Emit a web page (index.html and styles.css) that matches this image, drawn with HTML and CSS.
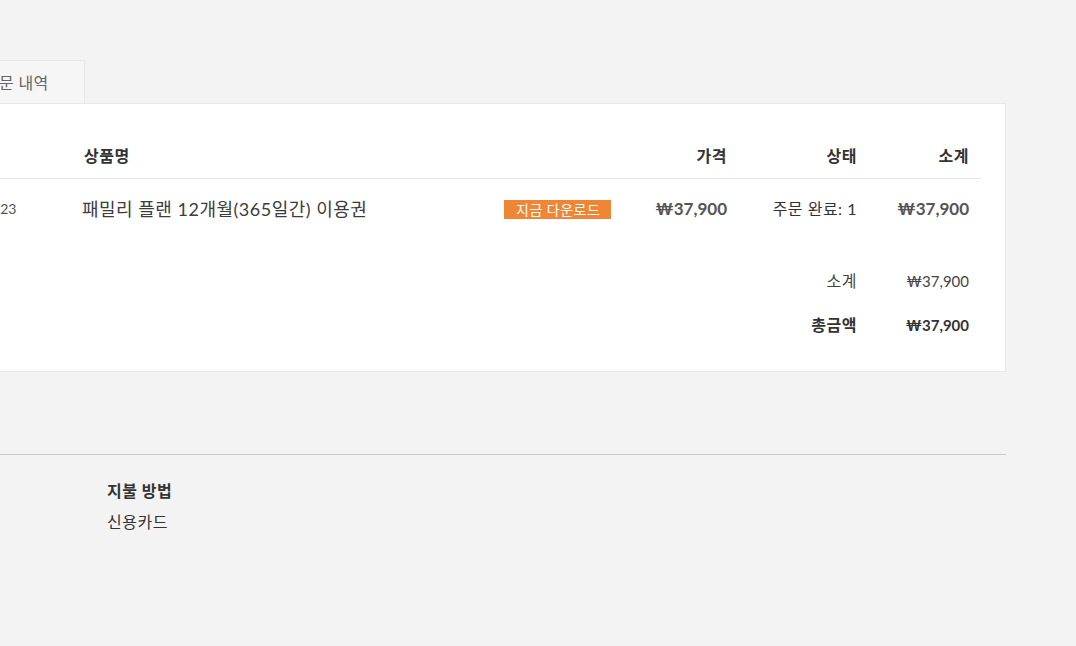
FILE: index.html
```
<!DOCTYPE html>
<html lang="ko">
<head>
<meta charset="utf-8">
<title>주문 내역</title>
<link rel="stylesheet" href="styles.css">
</head>
<body>
<div class="page">
  <div class="tabs">
    <div class="tab">주문 내역</div>
  </div>
  <div class="panel">
    <div class="row head">
      <div class="cell"></div>
      <div class="cell">상품명</div>
      <div class="cell"></div>
      <div class="cell right">가격</div>
      <div class="cell right">상태</div>
      <div class="cell right">소계</div>
    </div>
    <div class="row item">
      <div class="cell num">5123</div>
      <div class="cell name">패밀리 플랜 12개월(365일간) 이용권</div>
      <div class="cell"><span class="badge">지금 다운로드</span></div>
      <div class="cell right price">₩37,900</div>
      <div class="cell right status">주문 완료: 1</div>
      <div class="cell right price">₩37,900</div>
    </div>
    <div class="totals">
      <div class="row total">
        <div class="cell right label">소계</div>
        <div class="cell right value">₩37,900</div>
      </div>
      <div class="row total grand">
        <div class="cell right label">총금액</div>
        <div class="cell right value">₩37,900</div>
      </div>
    </div>
  </div>
  <div class="footer">
    <div class="pay">
      <div class="pay-title">지불 방법</div>
      <div class="pay-value">신용카드</div>
    </div>
  </div>
</div>
</body>
</html>
```
FILE: styles.css
```
html, body {
  margin: 0;
  padding: 0;
}
body {
  background: #f3f3f3;
  font-family: "Lato", "Noto Sans CJK KR", sans-serif;
  color: #333;
  overflow: hidden;
  height: 646px;
}
.page {
  margin-left: -53px;
  width: 1059px;
  padding-top: 60px;
}
.tabs {
  display: flex;
}
.tab {
  height: 43px;
  box-sizing: border-box;
  padding: 0 36px;
  display: flex;
  align-items: center;
  background: #f6f6f6;
  border: 1px solid #e7e7e7;
  border-bottom: none;
  font-size: 16px;
  letter-spacing: 0.3px;
  color: #666;
}
.panel {
  background: #fff;
  border: 1px solid #e8e8e8;
  padding: 30px 24px 24px;
}
.row {
  display: grid;
  grid-template-columns: 100px 420px 132px 115px 130px 1fr;
  align-items: center;
}
.cell {
  padding: 0 12px;
  line-height: 22px;
  white-space: nowrap;
}
.right {
  text-align: right;
}
.head {
  height: 44px;
  border-bottom: 1px solid #e6e6e6;
  font-size: 16px;
  letter-spacing: 0.5px;
  font-weight: 700;
  color: #333;
}
.item {
  height: 60px;
}
.num {
  font-size: 14px;
  color: #555;
  padding-right: 14px;
}
.name {
  font-size: 18px;
  letter-spacing: 0.5px;
  color: #3c3c3c;
  padding-left: 10px;
}
.badge {
  display: inline-block;
  background: #ee8636;
  color: #fff;
  font-size: 14px;
  letter-spacing: 0.5px;
  line-height: 19px;
  padding: 0 11px 0 12px;
  vertical-align: middle;
  position: relative;
  top: -1px;
}
.price {
  font-size: 17px;
  font-weight: 700;
  color: #555;
}
.status {
  font-size: 16px;
  letter-spacing: 0.5px;
  color: #333;
}
.totals {
  margin-top: 20px;
}
.total {
  height: 44px;
  font-size: 15px;
  color: #444;
}
.total .label {
  grid-column: 5;
  font-size: 16px;
  letter-spacing: 0.5px;
}
.total .value {
  grid-column: 6;
}
.grand {
  font-weight: 700;
  color: #333;
}
.footer {
  margin-top: 82px;
  border-top: 1px solid #cbcbcb;
  padding: 25px 0 0 160px;
}
.pay-title {
  font-size: 16px;
  letter-spacing: 0.5px;
  font-weight: 700;
  line-height: 22px;
  color: #333;
}
.pay-value {
  margin-top: 9px;
  font-size: 16px;
  letter-spacing: 0.5px;
  line-height: 22px;
  color: #333;
}
```
